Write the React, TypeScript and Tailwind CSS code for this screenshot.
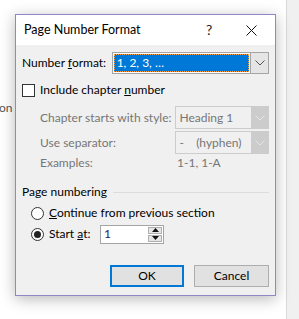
import React from 'react';

const Chevron: React.FC<{ color: string }> = ({ color }) => (
  <svg width="10" height="6" viewBox="0 0 10 6">
    <path d="M0.5 0.5 L5 5 L9.5 0.5" fill="none" stroke={color} strokeWidth="1" />
  </svg>
);

const DisabledCombo: React.FC<{ text: string }> = ({ text }) => (
  <div className="flex h-[23px] w-[94px] border border-[#cccccc] bg-[#f0f0f0]">
    <div className="flex flex-1 items-center pl-[3px] text-[#767676] whitespace-pre">{text}</div>
    <div className="flex w-[17px] items-center justify-center bg-[#cccccc]">
      <Chevron color="#e6e6e6" />
    </div>
  </div>
);

const App: React.FC = () => {
  return (
    <div
      className="relative flex h-[319px] w-[299px] bg-white text-[12px] leading-none whitespace-nowrap text-black"
      style={{ fontFamily: 'Lato, "Noto Sans", sans-serif' }}
    >
      <div className="flex w-[286px] items-start pt-[102px]">
        <span className="ml-[-1px] text-[#555]">on</span>
      </div>
      <div className="w-px bg-[#dadada]" />
      <div className="flex-1 bg-[#f0f0f0]" />

      {/* dialog window */}
      <div className="absolute left-[15px] top-[14px] flex h-[282px] w-[261px] flex-col border border-[#8e89c4] bg-[#f0f0f0] shadow-[0_3px_14px_rgba(0,0,0,0.28)]">
        <div className="flex h-[30px] shrink-0 items-center bg-white pl-[8px]">
          <span className="flex-1 text-[12.5px]">Page Number Format</span>
          <span className="w-[20px] text-[14px] text-[#222]">?</span>
          <svg width="11" height="11" viewBox="0 0 11 11" className="mr-[18px] ml-[20px]">
            <path d="M0.5 0.5 L10.5 10.5 M10.5 0.5 L0.5 10.5" stroke="#111" strokeWidth="1" />
          </svg>
        </div>

        <div className="flex flex-col pl-[6px] pr-[6px] pt-[7px]">
          <div className="flex h-[22px] items-center">
            <span className="w-[90px]">
              Number <u>f</u>ormat:
            </span>
            <div className="flex h-[22px] w-[158px] border border-[#a5a5a5] bg-white">
              <div className="flex flex-1 p-[1px]">
                <div className="flex flex-1 items-center border border-dotted border-[#f7a24a] bg-[#0078d7] pl-[2px] text-white">
                  1, 2, 3, …
                </div>
              </div>
              <div className="flex w-[18px] items-center justify-center border-l border-[#a5a5a5] bg-[#e5e5e5]">
                <Chevron color="#555" />
              </div>
            </div>
          </div>

          <div className="mt-[6px] flex h-[20px] items-center">
            <div className="h-[13px] w-[13px] border border-[#333] bg-white" />
            <span className="ml-[5px]">
              Include chapter <u>n</u>umber
            </span>
          </div>

          <div className="mt-[6px] flex h-[23px] items-center pl-[18px] text-[#767676]">
            <span className="w-[136px]">Chapter starts with style:</span>
            <DisabledCombo text="Heading 1" />
          </div>

          <div className="mt-[2px] flex h-[23px] items-center pl-[18px] text-[#767676]">
            <span className="w-[136px]">Use separator:</span>
            <DisabledCombo text={'-    (hyphen)'} />
          </div>

          <div className="flex h-[18px] items-center pl-[18px] text-[#767676]">
            <span className="w-[137px]">Examples:</span>
            <span>1-1, 1-A</span>
          </div>

          <div className="mt-[10px] flex h-[20px] items-center">
            <span>Page numbering</span>
            <div className="ml-[6px] h-px flex-1 bg-[#dcdcdc]" />
          </div>

          <div className="mt-[1px] flex h-[20px] items-center pl-[9px]">
            <div className="h-[13px] w-[13px] rounded-full border border-[#333] bg-white" />
            <span className="ml-[5px]">
              <u>C</u>ontinue from previous section
            </span>
          </div>

          <div className="mt-[1px] flex h-[20px] items-center pl-[9px]">
            <div className="flex h-[13px] w-[13px] items-center justify-center rounded-full border border-[#333] bg-white">
              <div className="h-[7px] w-[7px] rounded-full bg-[#222]" />
            </div>
            <span className="ml-[5px] w-[51px]">
              Start <u>a</u>t:
            </span>
            <div className="flex h-[19px] w-[64px] border border-[#a5a5a5] bg-white">
              <div className="flex flex-1 items-center pl-[3px] text-[#2a1a5e]">1</div>
              <div className="flex w-[16px] flex-col gap-[1px] bg-white p-[1px]">
                <div className="flex flex-1 items-center justify-center border border-[#b0b0b0] bg-[#e5e5e5]">
                  <svg width="7" height="4" viewBox="0 0 7 4">
                    <path d="M3.5 0 L7 4 L0 4 Z" fill="#111" />
                  </svg>
                </div>
                <div className="flex flex-1 items-center justify-center border border-[#b0b0b0] bg-[#e5e5e5]">
                  <svg width="7" height="4" viewBox="0 0 7 4">
                    <path d="M0 0 L7 0 L3.5 4 Z" fill="#111" />
                  </svg>
                </div>
              </div>
            </div>
          </div>

          <div className="mt-[21px] flex h-[22px] justify-end gap-[10px]">
            <button className="flex w-[74px] items-center justify-center border-2 border-[#0078d7] bg-[#e1e1e1]">
              OK
            </button>
            <button className="flex w-[75px] items-center justify-center border border-[#adadad] bg-[#e1e1e1]">
              Cancel
            </button>
          </div>
        </div>
      </div>
    </div>
  );
};

export default App;
